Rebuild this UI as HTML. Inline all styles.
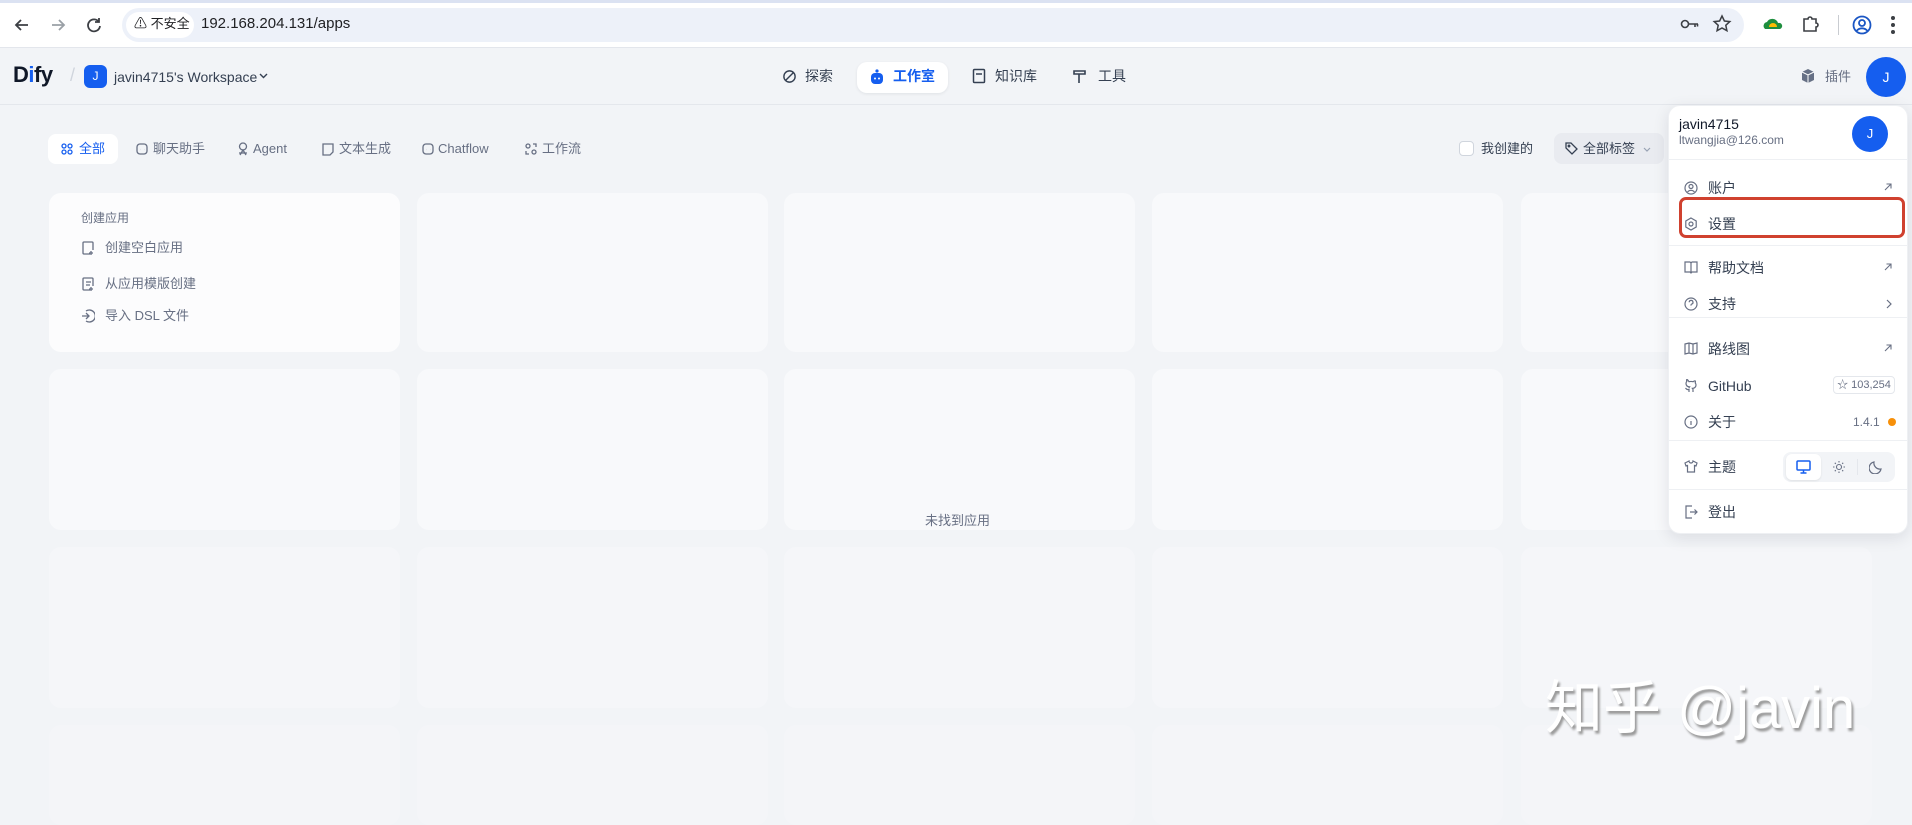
<!DOCTYPE html>
<html><head><meta charset="utf-8"><style>
*{box-sizing:border-box;margin:0;padding:0}
body{width:1912px;height:796px;overflow:hidden;background:#f2f4f7;font-family:"Liberation Sans","Noto Sans CJK SC",sans-serif;color:#354052;position:relative}
.a{position:absolute}
.t{position:absolute;white-space:nowrap;line-height:1}
.card{position:absolute;border-radius:12px;background:#f8f9fb}
.ic{position:absolute}
.mi{position:absolute;left:1708px;font-size:14px;color:#354052;line-height:1;white-space:nowrap}
.mic{position:absolute;left:1684px}
.div{position:absolute;left:1668px;width:240px;height:1px;background:#eef0f3}
.tb{position:absolute;top:142px;font-size:13px;color:#676f83;line-height:1;white-space:nowrap}
</style></head><body>
<!-- browser bar -->
<div class="a" style="left:0;top:0;width:1912px;height:48px;background:#fff;border-bottom:1px solid #e3e6ec"></div>
<div class="a" style="left:0;top:0;width:1912px;height:3px;background:#dbe2f2"></div>
<svg class="ic" style="left:12px;top:15px" width="20" height="20" viewBox="0 0 20 20" fill="none" stroke="#3c3f44" stroke-width="1.8"><path d="M16 10H4M9 5l-5 5 5 5"/></svg>
<svg class="ic" style="left:48px;top:15px" width="20" height="20" viewBox="0 0 20 20" fill="none" stroke="#9aa0a6" stroke-width="1.8"><path d="M4 10h12M11 5l5 5-5 5"/></svg>
<svg class="ic" style="left:84px;top:15px" width="20" height="20" viewBox="0 0 20 20" fill="none" stroke="#3c3f44" stroke-width="1.8"><path d="M15 7a6 6 0 1 0 1 4M15 3v4h-4"/></svg>
<div class="a" style="left:122px;top:8px;width:1622px;height:34px;border-radius:17px;background:#edf1f9"></div>
<div class="a" style="left:126px;top:12px;width:68px;height:26px;border-radius:13px;background:#fff"></div>
<div class="t" style="left:134px;top:17px;font-size:13px;color:#202124">⚠ 不安全</div>
<div class="t" style="left:201px;top:16px;font-size:15px;color:#202124">192.168.204.131/apps</div>
<svg class="ic" style="left:1680px;top:18px" width="20" height="12" viewBox="0 0 20 12" fill="none" stroke="#3c3f44" stroke-width="1.6"><circle cx="5" cy="6" r="3.5"/><path d="M8.5 6H18M15 6v3M17.5 6v2.5"/></svg>
<svg class="ic" style="left:1712px;top:14px" width="20" height="20" viewBox="0 0 20 20" fill="none" stroke="#3c3f44" stroke-width="1.5"><path d="M10 2l2.4 5 5.4.6-4 3.7 1.1 5.4L10 14l-4.9 2.7 1.1-5.4-4-3.7L7.6 7z"/></svg>
<svg class="ic" style="left:1762px;top:16px" width="22" height="16" viewBox="0 0 22 16"><path d="M3 13a4 4 0 0 1 2-7 6 6 0 0 1 11 1 3 3 0 0 1 2 6z" fill="#1e8e3e"/><path d="M7 11a3 3 0 0 1 8 0z" fill="#fbbc04"/></svg>
<svg class="ic" style="left:1800px;top:14px" width="20" height="20" viewBox="0 0 20 20" fill="none" stroke="#3c3f44" stroke-width="1.6"><path d="M4 5h4a2 2 0 0 1 4 0h4v4a2 2 0 0 1 0 4v4H4z"/></svg>
<div class="a" style="left:1838px;top:15px;width:1px;height:20px;background:#c9ccd1"></div>
<svg class="ic" style="left:1851px;top:14px" width="22" height="22" viewBox="0 0 22 22" fill="none" stroke="#1a56c4" stroke-width="1.8"><circle cx="11" cy="11" r="8.5"/><circle cx="11" cy="9" r="3"/><path d="M5.5 17a7 7 0 0 1 11 0"/></svg>
<svg class="ic" style="left:1890px;top:15px" width="6" height="20" viewBox="0 0 6 20" fill="#3c3f44"><circle cx="3" cy="3" r="2"/><circle cx="3" cy="10" r="2"/><circle cx="3" cy="17" r="2"/></svg>

<!-- header -->
<div class="a" style="left:0;top:104px;width:1912px;height:1px;background:#e4e7ec"></div>
<div class="t" style="left:13px;top:64px;font-size:22px;font-weight:bold;color:#101828;letter-spacing:-0.5px">D<span style="color:#155eef">i</span>fy</div>
<div class="t" style="left:70px;top:66px;font-size:18px;color:#d0d5dd">/</div>
<div class="a" style="left:84px;top:65px;width:23px;height:23px;border-radius:6px;background:#155eef;color:#fff;font-size:12px;text-align:center;line-height:23px">J</div>
<div class="t" style="left:114px;top:70px;font-size:14px;color:#354052">javin4715's Workspace</div>
<svg class="ic" style="left:259px;top:73px" width="9" height="6" viewBox="0 0 9 6" fill="none" stroke="#354052" stroke-width="1.4"><path d="M1 1l3.5 3.5L8 1"/></svg>
<svg class="ic" style="left:782px;top:69px" width="15" height="15" viewBox="0 0 16 16" fill="none" stroke="#354052" stroke-width="1.5"><circle cx="8" cy="8" r="6"/><path d="M4 12l8-8"/></svg>
<div class="t" style="left:805px;top:69px;font-size:14px;color:#354052">探索</div>
<div class="a" style="left:857px;top:62px;width:91px;height:31px;border-radius:10px;background:#fff;box-shadow:0 1px 3px rgba(16,24,40,.08)"></div>
<svg class="ic" style="left:869px;top:68px" width="16" height="18" viewBox="0 0 16 18"><circle cx="8" cy="3" r="1.6" fill="#155eef"/><rect x="2" y="5" width="12" height="11" rx="4" fill="#155eef"/><circle cx="6" cy="10.5" r="1" fill="#fff"/><circle cx="10" cy="10.5" r="1" fill="#fff"/></svg>
<div class="t" style="left:893px;top:69px;font-size:14px;color:#155eef;font-weight:bold">工作室</div>
<svg class="ic" style="left:972px;top:68px" width="14" height="16" viewBox="0 0 14 16" fill="none" stroke="#354052" stroke-width="1.5"><rect x="1.5" y="1.5" width="11" height="13" rx="1"/><path d="M4 6h6"/></svg>
<div class="t" style="left:995px;top:69px;font-size:14px;color:#354052">知识库</div>
<svg class="ic" style="left:1073px;top:68px" width="14" height="16" viewBox="0 0 14 16" fill="none" stroke="#354052" stroke-width="1.6"><path d="M1 3h11v3H1zM6 6v9"/></svg>
<div class="t" style="left:1098px;top:69px;font-size:14px;color:#354052">工具</div>
<svg class="ic" style="left:1800px;top:68px" width="16" height="16" viewBox="0 0 16 16"><path d="M8 1l6 3v8l-6 3-6-3V4z" fill="#667085"/><path d="M2 4l6 3 6-3M8 7v8" stroke="#fff" stroke-width="1" fill="none"/></svg>
<div class="t" style="left:1825px;top:70px;font-size:13px;color:#676f83">插件</div>
<div class="a" style="left:1866px;top:57px;width:40px;height:40px;border-radius:50%;background:#155eef;color:#fff;font-size:14px;text-align:center;line-height:40px">J</div>

<!-- tabs -->
<div class="a" style="left:48px;top:134px;width:70px;height:30px;border-radius:8px;background:#fff"></div>
<svg class="ic" style="left:61px;top:143px" width="12" height="12" viewBox="0 0 12 12" fill="none" stroke="#155eef" stroke-width="1.3"><circle cx="3" cy="3" r="2"/><circle cx="9" cy="3" r="2"/><circle cx="3" cy="9" r="2"/><circle cx="9" cy="9" r="2"/></svg>
<div class="tb" style="left:79px;color:#155eef">全部</div>
<svg class="ic" style="left:136px;top:143px" width="12" height="12" viewBox="0 0 12 12" fill="none" stroke="#676f83" stroke-width="1.3"><rect x="1" y="1" width="10" height="10" rx="3"/><path d="M4 6.5h.1M8 6.5h.1"/></svg>
<div class="tb" style="left:153px">聊天助手</div>
<svg class="ic" style="left:237px;top:142px" width="12" height="14" viewBox="0 0 12 14" fill="none" stroke="#676f83" stroke-width="1.3"><circle cx="6" cy="4.5" r="3.5"/><path d="M3 13l3-5 3 5M2 11h8"/></svg>
<div class="tb" style="left:253px">Agent</div>
<svg class="ic" style="left:322px;top:143px" width="12" height="13" viewBox="0 0 12 13" fill="none" stroke="#676f83" stroke-width="1.3"><path d="M1 1h10v8l-3 3H1z"/></svg>
<div class="tb" style="left:339px">文本生成</div>
<svg class="ic" style="left:422px;top:143px" width="12" height="12" viewBox="0 0 12 12" fill="none" stroke="#676f83" stroke-width="1.3"><rect x="1" y="1" width="10" height="10" rx="3"/><path d="M4 6.5h.1M8 6.5h.1"/></svg>
<div class="tb" style="left:438px">Chatflow</div>
<svg class="ic" style="left:525px;top:143px" width="12" height="12" viewBox="0 0 12 12" fill="none" stroke="#676f83" stroke-width="1.3"><circle cx="3" cy="3" r="2"/><circle cx="9" cy="9" r="2"/><path d="M8 1h3v3M1 8v3h3"/></svg>
<div class="tb" style="left:542px">工作流</div>
<div class="a" style="left:1459px;top:141px;width:15px;height:15px;border:1px solid #d0d5dd;border-radius:4px;background:#fff"></div>
<div class="t" style="left:1481px;top:142px;font-size:13px;color:#354052">我创建的</div>
<div class="a" style="left:1554px;top:133px;width:110px;height:31px;border-radius:8px;background:#e9ebf0"></div>
<svg class="ic" style="left:1565px;top:142px" width="13" height="13" viewBox="0 0 13 13" fill="none" stroke="#354052" stroke-width="1.3"><path d="M1 1h5l6 6-5 5-6-6z"/><circle cx="4" cy="4" r=".8"/></svg>
<div class="t" style="left:1583px;top:142px;font-size:13px;color:#354052">全部标签</div>
<svg class="ic" style="left:1643px;top:147px" width="8" height="5" viewBox="0 0 8 5" fill="none" stroke="#98a2b3" stroke-width="1.2"><path d="M1 1l3 3 3-3"/></svg>

<!-- cards -->
<div class="card" style="left:49px;top:193px;width:351px;height:159px;background:#fcfcfd"></div>
<div class="card" style="left:417px;top:193px;width:351px;height:159px"></div>
<div class="card" style="left:784px;top:193px;width:351px;height:159px"></div>
<div class="card" style="left:1152px;top:193px;width:351px;height:159px"></div>
<div class="card" style="left:1521px;top:193px;width:351px;height:159px"></div>
<div class="card" style="left:49px;top:369px;width:351px;height:161px"></div>
<div class="card" style="left:417px;top:369px;width:351px;height:161px"></div>
<div class="card" style="left:784px;top:369px;width:351px;height:161px"></div>
<div class="card" style="left:1152px;top:369px;width:351px;height:161px"></div>
<div class="card" style="left:1521px;top:369px;width:351px;height:161px"></div>
<div class="card" style="left:49px;top:547px;width:351px;height:161px;background:#f5f6f9"></div>
<div class="card" style="left:417px;top:547px;width:351px;height:161px;background:#f5f6f9"></div>
<div class="card" style="left:784px;top:547px;width:351px;height:161px;background:#f5f6f9"></div>
<div class="card" style="left:1152px;top:547px;width:351px;height:161px;background:#f5f6f9"></div>
<div class="card" style="left:1521px;top:547px;width:351px;height:161px;background:#f5f6f9"></div>
<div class="card" style="left:49px;top:725px;width:351px;height:100px;background:#f4f5f8"></div>
<div class="card" style="left:417px;top:725px;width:351px;height:100px;background:#f4f5f8"></div>
<div class="card" style="left:784px;top:725px;width:351px;height:100px;background:#f4f5f8"></div>
<div class="card" style="left:1152px;top:725px;width:351px;height:100px;background:#f4f5f8"></div>
<div class="card" style="left:1521px;top:725px;width:351px;height:100px;background:#f4f5f8"></div>
<div class="t" style="left:81px;top:212px;font-size:12px;color:#676f83">创建应用</div>
<svg class="ic" style="left:81px;top:240px" width="14" height="16" viewBox="0 0 14 16" fill="none" stroke="#676f83" stroke-width="1.3"><path d="M9 14H3a1 1 0 0 1-1-1V3a1 1 0 0 1 1-1h8a1 1 0 0 1 1 1v7M10 11v4M8 13h4"/></svg>
<div class="t" style="left:105px;top:241px;font-size:13px;color:#676f83">创建空白应用</div>
<svg class="ic" style="left:81px;top:276px" width="14" height="16" viewBox="0 0 14 16" fill="none" stroke="#676f83" stroke-width="1.3"><path d="M9 14H3a1 1 0 0 1-1-1V3a1 1 0 0 1 1-1h8a1 1 0 0 1 1 1v7M5 6h5M5 9h4M10 11v4M8 13h4"/></svg>
<div class="t" style="left:105px;top:277px;font-size:13px;color:#676f83">从应用模版创建</div>
<svg class="ic" style="left:81px;top:308px" width="14" height="16" viewBox="0 0 14 16" fill="none" stroke="#676f83" stroke-width="1.3"><path d="M5 3a6 6 0 1 1 0 10M1 8h7M5 5l3 3-3 3"/></svg>
<div class="t" style="left:105px;top:309px;font-size:13px;color:#676f83">导入 DSL 文件</div>
<div class="t" style="left:925px;top:514px;font-size:13px;color:#676f83">未找到应用</div>

<!-- watermark -->
<div class="t" style="left:1545px;top:680px;font-size:58px;color:#fff;text-shadow:2px 3px 2px #9a9a9a">知乎 @javin</div>

<!-- dropdown -->
<div class="a" style="left:1668px;top:105px;width:240px;height:429px;border-radius:12px;background:#fff;box-shadow:0 4px 16px rgba(16,24,40,.1);border:1px solid #eef0f3"></div>
<div class="t" style="left:1679px;top:117px;font-size:14px;color:#101828">javin4715</div>
<div class="t" style="left:1679px;top:134px;font-size:12px;color:#676f83">ltwangjia@126.com</div>
<div class="a" style="left:1852px;top:116px;width:36px;height:36px;border-radius:50%;background:#155eef;color:#fff;font-size:13px;text-align:center;line-height:36px">J</div>
<div class="div" style="top:159px"></div>

<svg class="mic" style="top:181px" width="14" height="14" viewBox="0 0 14 14" fill="none" stroke="#676f83" stroke-width="1.2"><circle cx="7" cy="7" r="6"/><circle cx="7" cy="5.5" r="2"/><path d="M3.5 11a4.5 4.5 0 0 1 7 0"/></svg>
<div class="mi" style="top:181px">账户</div>
<svg class="ic" style="left:1884px;top:183px" width="8" height="8" viewBox="0 0 8 8" fill="none" stroke="#676f83" stroke-width="1.1"><path d="M1 7l6-6M2.5 1H7v4.5"/></svg>

<div class="a" style="left:1679px;top:197px;width:226px;height:41px;border:3px solid #d0412f;border-radius:7px"></div>
<svg class="mic" style="top:217px" width="14" height="14" viewBox="0 0 14 14" fill="none" stroke="#676f83" stroke-width="1.2"><path d="M7 1l5.2 3v6L7 13l-5.2-3V4z"/><circle cx="7" cy="7" r="2"/></svg>
<div class="mi" style="top:217px">设置</div>
<div class="div" style="top:245px"></div>

<svg class="mic" style="top:261px" width="14" height="13" viewBox="0 0 14 13" fill="none" stroke="#676f83" stroke-width="1.2"><path d="M1 1h5l1 1 1-1h5v10H8l-1 1-1-1H1zM7 2v10"/></svg>
<div class="mi" style="top:261px">帮助文档</div>
<svg class="ic" style="left:1884px;top:263px" width="8" height="8" viewBox="0 0 8 8" fill="none" stroke="#676f83" stroke-width="1.1"><path d="M1 7l6-6M2.5 1H7v4.5"/></svg>

<svg class="mic" style="top:297px" width="14" height="14" viewBox="0 0 14 14" fill="none" stroke="#676f83" stroke-width="1.2"><circle cx="7" cy="7" r="6"/><path d="M5.2 5.3a1.9 1.9 0 1 1 2.5 1.8c-.5.2-.7.5-.7 1v.5M7 10.3v.1"/></svg>
<div class="mi" style="top:297px">支持</div>
<svg class="ic" style="left:1886px;top:299px" width="6" height="10" viewBox="0 0 6 10" fill="none" stroke="#676f83" stroke-width="1.2"><path d="M1 1l4 4-4 4"/></svg>
<div class="div" style="top:317px"></div>

<svg class="mic" style="top:342px" width="14" height="13" viewBox="0 0 14 13" fill="none" stroke="#676f83" stroke-width="1.2"><path d="M1 2l4-1 4 1 4-1v10l-4 1-4-1-4 1zM5 1v10M9 2v10"/></svg>
<div class="mi" style="top:342px">路线图</div>
<svg class="ic" style="left:1884px;top:344px" width="8" height="8" viewBox="0 0 8 8" fill="none" stroke="#676f83" stroke-width="1.1"><path d="M1 7l6-6M2.5 1H7v4.5"/></svg>

<svg class="mic" style="top:379px" width="14" height="14" viewBox="0 0 14 14" fill="none" stroke="#676f83" stroke-width="1.2"><path d="M5 13v-2.5c-2.5.5-3-1-3.5-1.5M9 13v-2.2c0-.7-.2-1.1-.5-1.4 2-.2 3.5-1 3.5-3.5a3 3 0 0 0-.8-2 2.6 2.6 0 0 0 0-2s-.7-.2-2.2.8a7.5 7.5 0 0 0-4 0C3.5.2 2.8.4 2.8.4a2.6 2.6 0 0 0 0 2 3 3 0 0 0-.8 2c0 2.5 1.5 3.3 3.5 3.5-.3.3-.5.7-.5 1.4"/></svg>
<div class="mi" style="top:379px">GitHub</div>
<div class="a" style="left:1833px;top:376px;width:62px;height:18px;border:1px solid #e4e7ec;border-radius:4px;font-size:11px;color:#676f83;text-align:center;line-height:16px">☆ 103,254</div>

<svg class="mic" style="top:415px" width="14" height="14" viewBox="0 0 14 14" fill="none" stroke="#676f83" stroke-width="1.2"><circle cx="7" cy="7" r="6"/><path d="M7 6v4M7 4v.1"/></svg>
<div class="mi" style="top:415px">关于</div>
<div class="t" style="left:1853px;top:416px;font-size:12px;color:#676f83">1.4.1</div>
<div class="a" style="left:1888px;top:418px;width:8px;height:8px;border-radius:50%;background:#f79009"></div>
<div class="div" style="top:440px"></div>

<svg class="mic" style="top:460px" width="14" height="13" viewBox="0 0 14 13" fill="none" stroke="#676f83" stroke-width="1.2"><path d="M5 1L1 3l1 3 1.5-.5V12h7V5.5L12 6l1-3-4-2a2 2 0 0 1-4 0z"/></svg>
<div class="mi" style="top:460px">主题</div>
<div class="a" style="left:1783px;top:452px;width:112px;height:30px;border-radius:8px;background:#f2f4f7"></div>
<div class="a" style="left:1786px;top:454px;width:35px;height:26px;border-radius:6px;background:#fff;box-shadow:0 1px 2px rgba(0,0,0,.08)"></div>
<svg class="ic" style="left:1796px;top:460px" width="15" height="14" viewBox="0 0 15 14" fill="none" stroke="#155eef" stroke-width="1.5"><rect x="1" y="1" width="13" height="9" rx="1"/><path d="M7.5 10v3M4.5 13h6"/></svg>
<svg class="ic" style="left:1832px;top:460px" width="14" height="14" viewBox="0 0 14 14" fill="none" stroke="#676f83" stroke-width="1.1"><circle cx="7" cy="7" r="2.5"/><path d="M7 1v1.5M7 11.5V13M1 7h1.5M11.5 7H13M2.8 2.8l1 1M10.2 10.2l1 1M2.8 11.2l1-1M10.2 3.8l1-1"/></svg>
<div class="a" style="left:1857px;top:459px;width:1px;height:16px;background:#e4e7ec"></div>
<svg class="ic" style="left:1869px;top:460px" width="14" height="14" viewBox="0 0 14 14" fill="none" stroke="#676f83" stroke-width="1.2"><path d="M12 9A6 6 0 0 1 5 2a6 6 0 1 0 7 7z"/></svg>
<div class="div" style="top:489px"></div>

<svg class="mic" style="top:505px" width="14" height="14" viewBox="0 0 14 14" fill="none" stroke="#676f83" stroke-width="1.2"><path d="M8 1H2v12h6M6 7h7M10.5 4.5L13 7l-2.5 2.5"/></svg>
<div class="mi" style="top:505px">登出</div>
</body></html>
